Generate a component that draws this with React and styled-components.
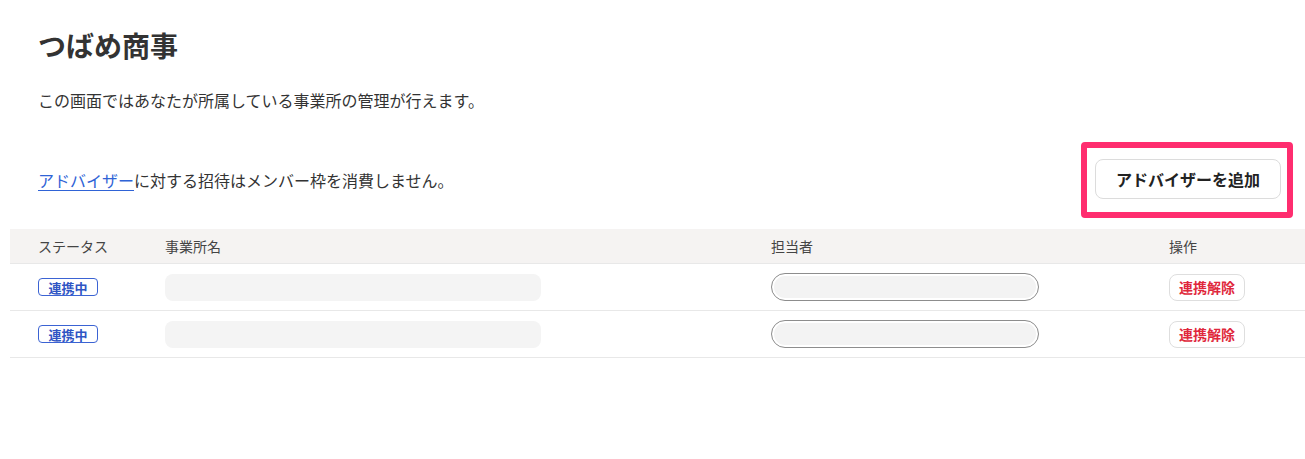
import React from "react";
import styled, { createGlobalStyle } from "styled-components";

const Global = createGlobalStyle`
  html, body { margin: 0; padding: 0; background: #fff; }
  body {
    font-family: "Noto Sans CJK JP", "Noto Sans", sans-serif;
    color: #333;
  }
`;

const Page = styled.div`
  padding-left: 10px;
  width: 1295px;
`;

const Intro = styled.section`
  padding: 0 12px 0 28px;
`;

const Title = styled.h1`
  margin: 25px 0 0;
  font-size: 28px;
  line-height: 40px;
  font-weight: 700;
  color: #333;
`;

const Description = styled.p`
  margin: 23px 0 0;
  font-size: 16px;
  line-height: 24px;
  color: #333;
`;

const ActionRow = styled.div`
  margin-top: 30px;
  display: flex;
  align-items: center;
  justify-content: space-between;
`;

const Note = styled.p`
  margin: 0;
  font-size: 16px;
  line-height: 24px;
  color: #333;
`;

const Link = styled.a`
  color: #2f63d6;
  text-decoration: underline;
  text-underline-offset: 3px;
  cursor: pointer;
`;

const Highlight = styled.div`
  border: 6px solid #ff2d6f;
  border-radius: 4px;
  padding: 11px 6px 13px 8px;
`;

const PrimaryButton = styled.button`
  height: 40px;
  padding: 0 20px;
  border: 1px solid #dcdcdc;
  border-radius: 8px;
  background: #fff;
  font-family: inherit;
  font-size: 16px;
  font-weight: 700;
  color: #222;
  cursor: pointer;
`;

const Table = styled.div`
  margin-top: 11px;
`;

const Row = styled.div`
  display: grid;
  grid-template-columns: 127px 606px 398px 1fr;
  align-items: center;
  height: ${(p) => (p.$head ? "34px" : "46px")};
  background: ${(p) => (p.$head ? "#f5f3f2" : "#fff")};
  border-bottom: 1px solid #e8e8e8;
`;

const Cell = styled.div`
  padding-left: 28px;
  display: flex;
  align-items: center;
`;

const HeadCell = styled(Cell)`
  font-size: 14px;
  color: #444;
`;

const Badge = styled.span`
  display: inline-flex;
  align-items: center;
  justify-content: center;
  box-sizing: border-box;
  width: 60px;
  height: 18px;
  border: 1.5px solid #3b63d3;
  border-radius: 4px;
  color: #2f55c4;
  font-size: 13px;
  font-weight: 700;
  line-height: 1;
`;

const NameBar = styled.div`
  width: 376px;
  height: 27px;
  border-radius: 8px;
  background: #f4f4f4;
`;

const PersonField = styled.div`
  box-sizing: border-box;
  width: 268px;
  height: 28px;
  border-radius: 14px;
  border: 1.5px solid #8d8d8d;
  background: #f3f3f3;
  box-shadow: inset 0 0 0 2px #fff;
`;

const DangerButton = styled.button`
  box-sizing: border-box;
  height: 27px;
  padding: 0 9px;
  border: 1px solid #dedede;
  border-radius: 8px;
  background: #fff;
  font-family: inherit;
  font-size: 14px;
  font-weight: 700;
  color: #e0283c;
  cursor: pointer;
`;

const rows = [1, 2];

export default function App() {
  return (
    <>
      <Global />
      <Page>
        <Intro>
          <Title>つばめ商事</Title>
          <Description>この画面ではあなたが所属している事業所の管理が行えます。</Description>
          <ActionRow>
            <Note>
              <Link>アドバイザー</Link>に対する招待はメンバー枠を消費しません。
            </Note>
            <Highlight>
              <PrimaryButton>アドバイザーを追加</PrimaryButton>
            </Highlight>
          </ActionRow>
        </Intro>
        <Table>
          <Row $head>
            <HeadCell>ステータス</HeadCell>
            <HeadCell>事業所名</HeadCell>
            <HeadCell>担当者</HeadCell>
            <HeadCell>操作</HeadCell>
          </Row>
          {rows.map((r) => (
            <Row key={r}>
              <Cell>
                <Badge>連携中</Badge>
              </Cell>
              <Cell>
                <NameBar />
              </Cell>
              <Cell>
                <PersonField />
              </Cell>
              <Cell>
                <DangerButton>連携解除</DangerButton>
              </Cell>
            </Row>
          ))}
        </Table>
      </Page>
    </>
  );
}
